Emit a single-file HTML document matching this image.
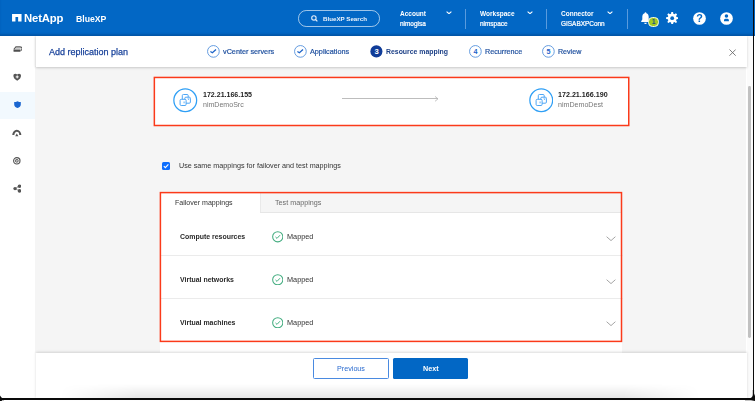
<!DOCTYPE html>
<html>
<head>
<meta charset="utf-8">
<title>BlueXP - Add replication plan</title>
<style>
*{box-sizing:border-box;margin:0;padding:0}
html,body{width:755px;height:401px;overflow:hidden;background:#fff;font-family:"Liberation Sans",sans-serif;}
#app{position:absolute;left:0;top:0;width:755px;height:401px;overflow:hidden;background:#fff}
.abs{position:absolute}
.t{position:absolute;white-space:nowrap;line-height:1.15;will-change:transform}
</style>
</head>
<body>
<div id="app">

<!-- sidebar -->
<div class="abs" style="left:0px;top:35px;width:35.5px;height:364px;background:#fff"></div>
<div class="abs" style="left:0px;top:91.5px;width:35.4px;height:27px;background:#f2f9fe"></div>
<!-- content area -->
<div class="abs" style="left:35.4px;top:66px;width:711.1px;height:287px;background:#f5f5f5"></div>
<!-- scrollbar track + thumb -->
<div class="abs" style="left:746.5px;top:36px;width:6.3px;height:363px;background:#fbfbfb"></div>
<div class="abs" style="left:748.1px;top:86px;width:2.7px;height:252px;background:#c1c1c1;border-radius:1.4px"></div>
<!-- site card -->
<div class="abs" style="left:154.3px;top:77.4px;width:474.5px;height:48.2px;background:#fff"></div>
<svg class="abs" style="left:173.45px;top:88.45px;" width="24.5" height="24.5" viewBox="0 0 24.5 24.5"><circle cx="12.25" cy="12.25" r="11.400" fill="#fff" stroke="#2f9ff5" stroke-width="1.25"/><rect x="9.3" y="6.5" width="5.9" height="5.8" rx="1.1" fill="none" stroke="#45a1f4" stroke-width=".95"/><rect x="11.800" y="9.200" width="5.600" height="6" rx="1.1" fill="#fff" stroke="#45a1f4" stroke-width=".95"/><rect x="7.100" y="11.300" width="6" height="6.200" rx="1.1" fill="#fff" stroke="#45a1f4" stroke-width=".95"/><path d="M11.100 13.500V15.300" stroke="#45a1f4" stroke-width=".9"/><path d="M14.900 10.300L15.500 11.700L16.100 10.300" fill="none" stroke="#45a1f4" stroke-width=".7"/></svg>
<div class="t" style="left:203.3px;top:90.95px;font-size:7.05px;color:#222;font-weight:bold;">172.21.166.155</div>
<div class="t" style="left:203px;top:101.25px;font-size:7.05px;color:#777;">nimDemoSrc</div>
<div class="abs" style="left:342px;top:98.4px;width:95.5px;height:0.9px;background:#bdbdbd"></div>
<svg class="abs" style="left:433px;top:96px;" width="6" height="6" viewBox="0 0 6 6"><path d="M2 .4L5 2.850L2 5.300" fill="none" stroke="#b5b5b5" stroke-width=".8"/></svg>
<svg class="abs" style="left:528.95px;top:88.45px;" width="24.5" height="24.5" viewBox="0 0 24.5 24.5"><circle cx="12.25" cy="12.25" r="11.400" fill="#fff" stroke="#2f9ff5" stroke-width="1.25"/><rect x="9.3" y="6.5" width="5.9" height="5.8" rx="1.1" fill="none" stroke="#45a1f4" stroke-width=".95"/><rect x="11.800" y="9.200" width="5.600" height="6" rx="1.1" fill="#fff" stroke="#45a1f4" stroke-width=".95"/><rect x="7.100" y="11.300" width="6" height="6.200" rx="1.1" fill="#fff" stroke="#45a1f4" stroke-width=".95"/><path d="M11.100 13.500V15.300" stroke="#45a1f4" stroke-width=".9"/><path d="M14.900 10.300L15.500 11.700L16.100 10.300" fill="none" stroke="#45a1f4" stroke-width=".7"/></svg>
<div class="t" style="left:558px;top:90.89px;font-size:7.15px;color:#222;font-weight:bold;">172.21.166.190</div>
<div class="t" style="left:558.3px;top:101.22px;font-size:7.1px;color:#777;">nimDemoDest</div>
<svg class="abs" style="left:150px;top:73px;" width="484" height="58" viewBox="0 0 484 58"><rect x="4.350" y="4.450" width="474.400" height="48.050" fill="none" stroke="#fb3a1a" stroke-width="1.500"/></svg>
<!-- checkbox -->
<div class="abs" style="left:162px;top:161.8px;width:8.1px;height:8.1px;background:#0d6efd;border-radius:1.5px"></div>
<svg class="abs" style="left:162px;top:161.8px;" width="8.1" height="8.1" viewBox="0 0 8 8"><path d="M1.8 4.1L3.3 5.6L6.3 2.3" fill="none" stroke="#fff" stroke-width="1.1"/></svg>
<div class="t" style="left:178.7px;top:161.96px;font-size:7.2px;color:#333;">Use same mappings for failover and test mappings</div>
<!-- mappings card -->
<div class="abs" style="left:160.4px;top:192.6px;width:461.2px;height:160px;background:#fff"></div>
<div class="abs" style="left:160.4px;top:192.6px;width:461.2px;height:20.2px;background:#f5f5f5;border-bottom:1px solid #e6e6e6"></div>
<div class="abs" style="left:160.4px;top:192.6px;width:99.6px;height:20.2px;background:#fff"></div>
<div class="abs" style="left:260px;top:192.6px;width:0.8px;height:19.4px;background:#e9e9e9"></div>
<div class="t" style="left:175px;top:198.55px;font-size:7.05px;color:#333;">Failover mappings</div>
<div class="t" style="left:274.8px;top:199.26px;font-size:7.2px;color:#6a6a6a;">Test mappings</div>
<div class="abs" style="left:160px;top:255px;width:462.5px;height:1px;background:#ebebeb"></div>
<div class="abs" style="left:160px;top:297.7px;width:462.5px;height:1px;background:#ebebeb"></div>
<div class="t" style="left:180px;top:233.1px;font-size:6.95px;color:#2a2a2a;font-weight:bold;">Compute resources</div>
<svg class="abs" style="left:271.9px;top:231.35px;" width="11.5" height="11.5" viewBox="0 0 11.5 11.5"><circle cx="5.75" cy="5.75" r="5.1" fill="none" stroke="#44ad80" stroke-width="1.05"/><path d="M3.5 5.95L5 7.400L8 4.200" fill="none" stroke="#44ad80" stroke-width="1"/></svg>
<div class="t" style="left:287px;top:232.9px;font-size:7.3px;color:#333;">Mapped</div>
<svg class="abs" style="left:606.4px;top:235.9px;" width="10" height="6" viewBox="0 0 10 6"><path d="M.6 .7L5 4.600L9.4 .7" fill="none" stroke="#8e8e8e" stroke-width=".8"/></svg>
<div class="t" style="left:180px;top:275.7px;font-size:6.95px;color:#2a2a2a;font-weight:bold;">Virtual networks</div>
<svg class="abs" style="left:271.9px;top:273.95px;" width="11.5" height="11.5" viewBox="0 0 11.5 11.5"><circle cx="5.75" cy="5.75" r="5.1" fill="none" stroke="#44ad80" stroke-width="1.05"/><path d="M3.5 5.95L5 7.400L8 4.200" fill="none" stroke="#44ad80" stroke-width="1"/></svg>
<div class="t" style="left:287px;top:275.5px;font-size:7.3px;color:#333;">Mapped</div>
<svg class="abs" style="left:606.4px;top:278.5px;" width="10" height="6" viewBox="0 0 10 6"><path d="M.6 .7L5 4.600L9.4 .7" fill="none" stroke="#8e8e8e" stroke-width=".8"/></svg>
<div class="t" style="left:180px;top:319.2px;font-size:6.95px;color:#2a2a2a;font-weight:bold;">Virtual machines</div>
<svg class="abs" style="left:271.9px;top:316.55px;" width="11.5" height="11.5" viewBox="0 0 11.5 11.5"><circle cx="5.75" cy="5.75" r="5.1" fill="none" stroke="#44ad80" stroke-width="1.05"/><path d="M3.5 5.95L5 7.400L8 4.200" fill="none" stroke="#44ad80" stroke-width="1"/></svg>
<div class="t" style="left:287px;top:319px;font-size:7.3px;color:#333;">Mapped</div>
<svg class="abs" style="left:606.4px;top:321.1px;" width="10" height="6" viewBox="0 0 10 6"><path d="M.6 .7L5 4.600L9.4 .7" fill="none" stroke="#8e8e8e" stroke-width=".8"/></svg>
<svg class="abs" style="left:156px;top:188px;" width="471" height="158" viewBox="0 0 471 158"><rect x="4.400" y="4.600" width="461.100" height="148.800" fill="none" stroke="#fb3a1a" stroke-width="1.500"/></svg>
<!-- wizard bar -->
<div class="abs" style="left:35.5px;top:36px;width:711px;height:31px;background:#fff;box-shadow:0 1px 2.5px rgba(0,0,0,.16), -1px 0 2px rgba(0,0,0,.08)"></div>
<div class="t" style="left:49px;top:46.62px;font-size:9px;color:#19429a;-webkit-text-stroke:.25px #19429a;">Add replication plan</div>
<svg class="abs" style="left:207.1px;top:45px;" width="12.8" height="12.8" viewBox="0 0 12.8 12.8"><circle cx="6.400" cy="6.400" r="5.850" fill="none" stroke="#5592dd" stroke-width=".9"/><path d="M3.400 6.500L5.400 7.800L9 4.500" fill="none" stroke="#1a62c8" stroke-width="1.250"/></svg>
<div class="t" style="left:223.3px;top:47.53px;font-size:7.25px;color:#1e4f9e;-webkit-text-stroke:.2px #1e4f9e;">vCenter servers</div>
<svg class="abs" style="left:294.1px;top:45px;" width="12.8" height="12.8" viewBox="0 0 12.8 12.8"><circle cx="6.400" cy="6.400" r="5.850" fill="none" stroke="#5592dd" stroke-width=".9"/><path d="M3.400 6.500L5.400 7.800L9 4.500" fill="none" stroke="#1a62c8" stroke-width="1.250"/></svg>
<div class="t" style="left:310.2px;top:47.53px;font-size:7.25px;color:#1e4f9e;-webkit-text-stroke:.2px #1e4f9e;">Applications</div>
<svg class="abs" style="left:370.1px;top:45px;" width="12.8" height="12.8" viewBox="0 0 12.8 12.8"><circle cx="6.400" cy="6.400" r="6.050" fill="#103c98"/><text x="6.550" y="9.150" font-family="Liberation Sans, sans-serif" font-size="7.700" font-weight="bold" fill="#fff" text-anchor="middle">3</text></svg>
<div class="t" style="left:386px;top:47.73px;font-size:6.9px;color:#1b3f86;font-weight:bold;">Resource mapping</div>
<svg class="abs" style="left:469px;top:45px;" width="12.8" height="12.8" viewBox="0 0 12.8 12.8"><circle cx="6.400" cy="6.400" r="5.850" fill="none" stroke="#5592dd" stroke-width=".9"/><text x="6.450" y="9" font-family="Liberation Sans, sans-serif" font-size="7.200" font-weight="bold" fill="#1d63c9" text-anchor="middle">4</text></svg>
<div class="t" style="left:485.4px;top:47.56px;font-size:7.2px;color:#1e4f9e;-webkit-text-stroke:.2px #1e4f9e;">Recurrence</div>
<svg class="abs" style="left:542.3px;top:45px;" width="12.8" height="12.8" viewBox="0 0 12.8 12.8"><circle cx="6.400" cy="6.400" r="5.850" fill="none" stroke="#5592dd" stroke-width=".9"/><text x="6.450" y="9" font-family="Liberation Sans, sans-serif" font-size="7.200" font-weight="bold" fill="#1d63c9" text-anchor="middle">5</text></svg>
<div class="t" style="left:558.3px;top:47.62px;font-size:7.1px;color:#1e4f9e;-webkit-text-stroke:.2px #1e4f9e;">Review</div>
<svg class="abs" style="left:728.8px;top:49.3px;" width="7.2" height="7.2" viewBox="0 0 7.2 7.2"><path d="M.5 .5L6.700 6.700M6.700 .5L.5 6.700" stroke="#666" stroke-width=".85"/></svg>
<!-- footer -->
<div class="abs" style="left:35.5px;top:352.8px;width:711px;height:46.2px;background:#fff;box-shadow:0 -1.5px 2.5px rgba(0,0,0,.15)"></div>
<div class="abs" style="left:60px;top:384px;width:640px;height:15px;background:linear-gradient(to bottom,rgba(0,0,0,0),rgba(0,0,0,.10));-webkit-mask-image:linear-gradient(to right,transparent,#000 12%,#000 88%,transparent);mask-image:linear-gradient(to right,transparent,#000 12%,#000 88%,transparent)"></div>
<div class="abs" style="left:313.1px;top:358.1px;width:76.3px;height:20.6px;border:1px solid #4a8ae0;border-radius:1.5px;background:#fff"></div>
<div class="t" style="left:337.4px;top:365.16px;font-size:7.2px;color:#2a6bcf;">Previous</div>
<div class="abs" style="left:392.5px;top:358.1px;width:75.6px;height:20.6px;border-radius:1.5px;background:#0267c5"></div>
<div class="t" style="left:422.8px;top:365.16px;font-size:7.2px;color:#fff;font-weight:bold;">Next</div>
<!-- sidebar icons -->
<svg class="abs" style="left:12.5px;top:46px;" width="9.8" height="6.2" viewBox="0 0 9.800 6.200"><path d="M.5 3.500H7.500V5.200C7.500 5.600 7.200 5.800 6.900 5.800H1.100C.8 5.800 .5 5.600 .5 5.200Z" fill="#4f4f4f"/><path d="M.9 3.300L2.900 .9H6.900C8.600 .9 9.500 2 8.800 3.200L7.800 4.800" fill="none" stroke="#5a5a5a" stroke-width="1.100"/><path d="M2.300 2.500L3.400 1.500H6.600C7.400 1.500 7.900 2 7.600 2.500Z" fill="#9a9a9a"/></svg>
<svg class="abs" style="left:12.9px;top:73.3px;" width="8.4" height="8" viewBox="0 0 8.4 8"><path d="M4.200 7.700C1.600 6.200 .4 4.600 .4 2.700C.4 1 2.300 .1 4.200 1.500C6.100 .1 8 1 8 2.700C8 4.600 6.800 6.200 4.200 7.700Z" fill="#555"/><path d="M4.200 2.400V5.400M2.700 3.900H5.700" fill="none" stroke="#fff" stroke-width="1"/></svg>
<svg class="abs" style="left:13.5px;top:101.3px;" width="7" height="7" viewBox="0 0 7 7"><path d="M3.500 .2C4.600 .9 5.700 1.100 6.800 1.100V3.400C6.800 5.100 5.400 6.300 3.500 6.900C1.600 6.300 .2 5.100 .2 3.400V1.100C1.300 1.100 2.400 .9 3.500 .2Z" fill="#1a66d0"/></svg>
<svg class="abs" style="left:12.3px;top:129.3px;" width="9.6" height="7.4" viewBox="0 0 9.600 7.400"><path d="M1.300 6.100A3.500 4.300 0 0 1 8.300 6.100" fill="none" stroke="#555" stroke-width="2.100"/><path d="M4.800 4.600L6.400 7.200H3.200Z" fill="#555"/></svg>
<svg class="abs" style="left:13.4px;top:157.1px;" width="7.6" height="7.6" viewBox="0 0 7.600 7.600"><circle cx="3.800" cy="3.800" r="3.200" fill="none" stroke="#555" stroke-width="1.150"/><circle cx="3.800" cy="3.800" r="1.400" fill="none" stroke="#555" stroke-width="1"/><circle cx="3.800" cy="3.800" r=".55" fill="#555"/></svg>
<svg class="abs" style="left:12.7px;top:184.1px;" width="8.8" height="9" viewBox="0 0 8.800 9"><path d="M2 4.600L6.500 2.100M2 4.600L6.500 6.900" stroke="#555" stroke-width=".6"/><circle cx="2" cy="4.600" r="1.650" fill="#555"/><circle cx="6.500" cy="2.200" r="1.800" fill="#555"/><circle cx="6.500" cy="6.900" r="1.800" fill="#555"/></svg>
<!-- header -->
<div class="abs" style="left:0px;top:0px;width:755px;height:35.7px;background:#0267c5;box-shadow:inset 0 -2.5px 2px -0.5px #0256a8"></div>
<svg class="abs" style="left:12px;top:14px;" width="9.6" height="7.6" viewBox="0 0 10 8"><path d="M0 0H10V8H6.4V3.1H3.6V8H0Z" fill="#fff"/></svg>
<div class="t" style="left:24px;top:11.5px;font-size:11.3px;color:#fff;font-weight:bold;letter-spacing:-.15px;">NetApp</div>
<div class="t" style="left:76px;top:14px;font-size:8.7px;color:#fff;font-weight:bold;">BlueXP</div>
<div class="abs" style="left:298.2px;top:10.2px;width:81.8px;height:16.4px;border:1px solid rgba(255,255,255,.62);border-radius:8.2px"></div>
<svg class="abs" style="left:311.3px;top:14.8px;" width="7" height="7" viewBox="0 0 7 7"><circle cx="2.900" cy="2.900" r="2.200" fill="none" stroke="#e4edf9" stroke-width="1.1"/><path d="M4.500 4.500L6.400 6.400" stroke="#e4edf9" stroke-width="1.2"/></svg>
<div class="t" style="left:323.2px;top:15.33px;font-size:6.2px;color:#eef4fc;font-weight:bold;">BlueXP Search</div>
<div class="t" style="left:399.8px;top:9.76px;font-size:6.5px;color:#fff;font-weight:bold;">Account</div>
<div class="t" style="left:399.8px;top:19.69px;font-size:6.45px;color:#fff;-webkit-text-stroke:.22px #fff;">nimogisa</div>
<div class="t" style="left:480.1px;top:9.76px;font-size:6.5px;color:#fff;font-weight:bold;">Workspace</div>
<div class="t" style="left:480.1px;top:19.69px;font-size:6.45px;color:#fff;-webkit-text-stroke:.22px #fff;">nimspace</div>
<div class="t" style="left:561px;top:9.76px;font-size:6.5px;color:#fff;font-weight:bold;">Connector</div>
<div class="t" style="left:561px;top:19.69px;font-size:6.45px;color:#fff;-webkit-text-stroke:.22px #fff;">GISABXPConn</div>
<svg class="abs" style="left:446.1px;top:10.9px;" width="6" height="3.4" viewBox="0 0 6 3.4"><path d="M.6 .6L3 2.700L5.400 .6" fill="none" stroke="#fff" stroke-width="1.1"/></svg>
<svg class="abs" style="left:526.7px;top:10.9px;" width="6" height="3.4" viewBox="0 0 6 3.4"><path d="M.6 .6L3 2.700L5.400 .6" fill="none" stroke="#fff" stroke-width="1.1"/></svg>
<svg class="abs" style="left:607.4px;top:10.9px;" width="6" height="3.4" viewBox="0 0 6 3.4"><path d="M.6 .6L3 2.700L5.400 .6" fill="none" stroke="#fff" stroke-width="1.1"/></svg>
<div class="abs" style="left:465px;top:9px;width:1px;height:20px;background:#5a9bdd"></div>
<div class="abs" style="left:546px;top:9px;width:1px;height:20px;background:#5a9bdd"></div>
<div class="abs" style="left:627px;top:9px;width:1px;height:20px;background:#5a9bdd"></div>
<svg class="abs" style="left:641.4px;top:11.9px;" width="9" height="12.8" viewBox="0 0 9 12.8"><path d="M4.500 .3C3.900 .3 3.600 .7 3.600 1.200C2.100 1.700 1.300 3.100 1.300 4.800V7.600L.2 9.300V10H8.800V9.300L7.700 7.600V4.800C7.700 3.100 6.900 1.700 5.400 1.200C5.400 .7 5.100 .3 4.500 .3Z" fill="#fff"/><path d="M3.200 10.700a1.300 1.300 0 0 0 2.600 0Z" fill="#fff"/></svg>
<div class="abs" style="left:647.9px;top:17.3px;width:10.9px;height:9.5px;border-radius:4.5px;background:#a2c922;border:1.1px solid #f4f8ea"></div>
<div class="t" style="left:651.9px;top:18.4px;font-size:6.6px;color:#1d4b8c;font-weight:bold;">1</div>
<svg class="abs" style="left:666.1px;top:12.1px;" width="12.4" height="12.4" viewBox="0 0 12.4 12.4"><path d="M5.04 1.85L5.34 0.11L7.06 0.11L7.36 1.85L8.45 2.30L9.90 1.29L11.11 2.50L10.10 3.95L10.55 5.04L12.29 5.34L12.29 7.06L10.55 7.36L10.10 8.45L11.11 9.90L9.90 11.11L8.45 10.10L7.36 10.55L7.06 12.29L5.34 12.29L5.04 10.55L3.95 10.10L2.50 11.11L1.29 9.90L2.30 8.45L1.85 7.36L0.11 7.06L0.11 5.34L1.85 5.04L2.30 3.95L1.29 2.50L2.50 1.29L3.95 2.30Z" fill="#fff"/><circle cx="6.200" cy="6.200" r="1.900" fill="#0267c5"/></svg>
<svg class="abs" style="left:693px;top:11.7px;" width="13" height="13" viewBox="0 0 13 13"><circle cx="6.500" cy="6.500" r="6.350" fill="#fff"/><text x="6.500" y="10.300" font-family="Liberation Sans, sans-serif" font-size="10.800" font-weight="bold" fill="#0267c5" text-anchor="middle">?</text></svg>
<svg class="abs" style="left:719.7px;top:11.7px;" width="13" height="13" viewBox="0 0 13 13"><circle cx="6.500" cy="6.500" r="6.350" fill="#fff"/><circle cx="6.450" cy="4.100" r="1.750" fill="#0267c5"/><path d="M4 9.300V8.100C4 7.100 5.200 6.700 6.450 6.700S8.900 7.100 8.900 8.100V9.300Z" fill="#0267c5"/></svg>
<!-- window edge lines -->
<div class="abs" style="left:1.5px;top:398.2px;width:748px;height:2px;background:#0a0a0a"></div>
<div class="abs" style="left:752.8px;top:0px;width:1.3px;height:392px;background:#0a0a0a"></div>
<svg class="abs" style="left:745px;top:390px;" width="10" height="11" viewBox="0 0 10 11"><path d="M7.800 0V4.200A4 4 0 0 1 3.800 8.200H0V10.200H6L10 11V6L9.100 3.500V0Z" fill="#0a0a0a"/></svg>
<svg class="abs" style="left:0px;top:394px;" width="4" height="7" viewBox="0 0 4 7"><path d="M0 1.500L1.200 3.300L2.500 4.200H4V6.200H2.200L1.600 7H0Z" fill="#0a0a0a"/></svg>
</div>
</body>
</html>
